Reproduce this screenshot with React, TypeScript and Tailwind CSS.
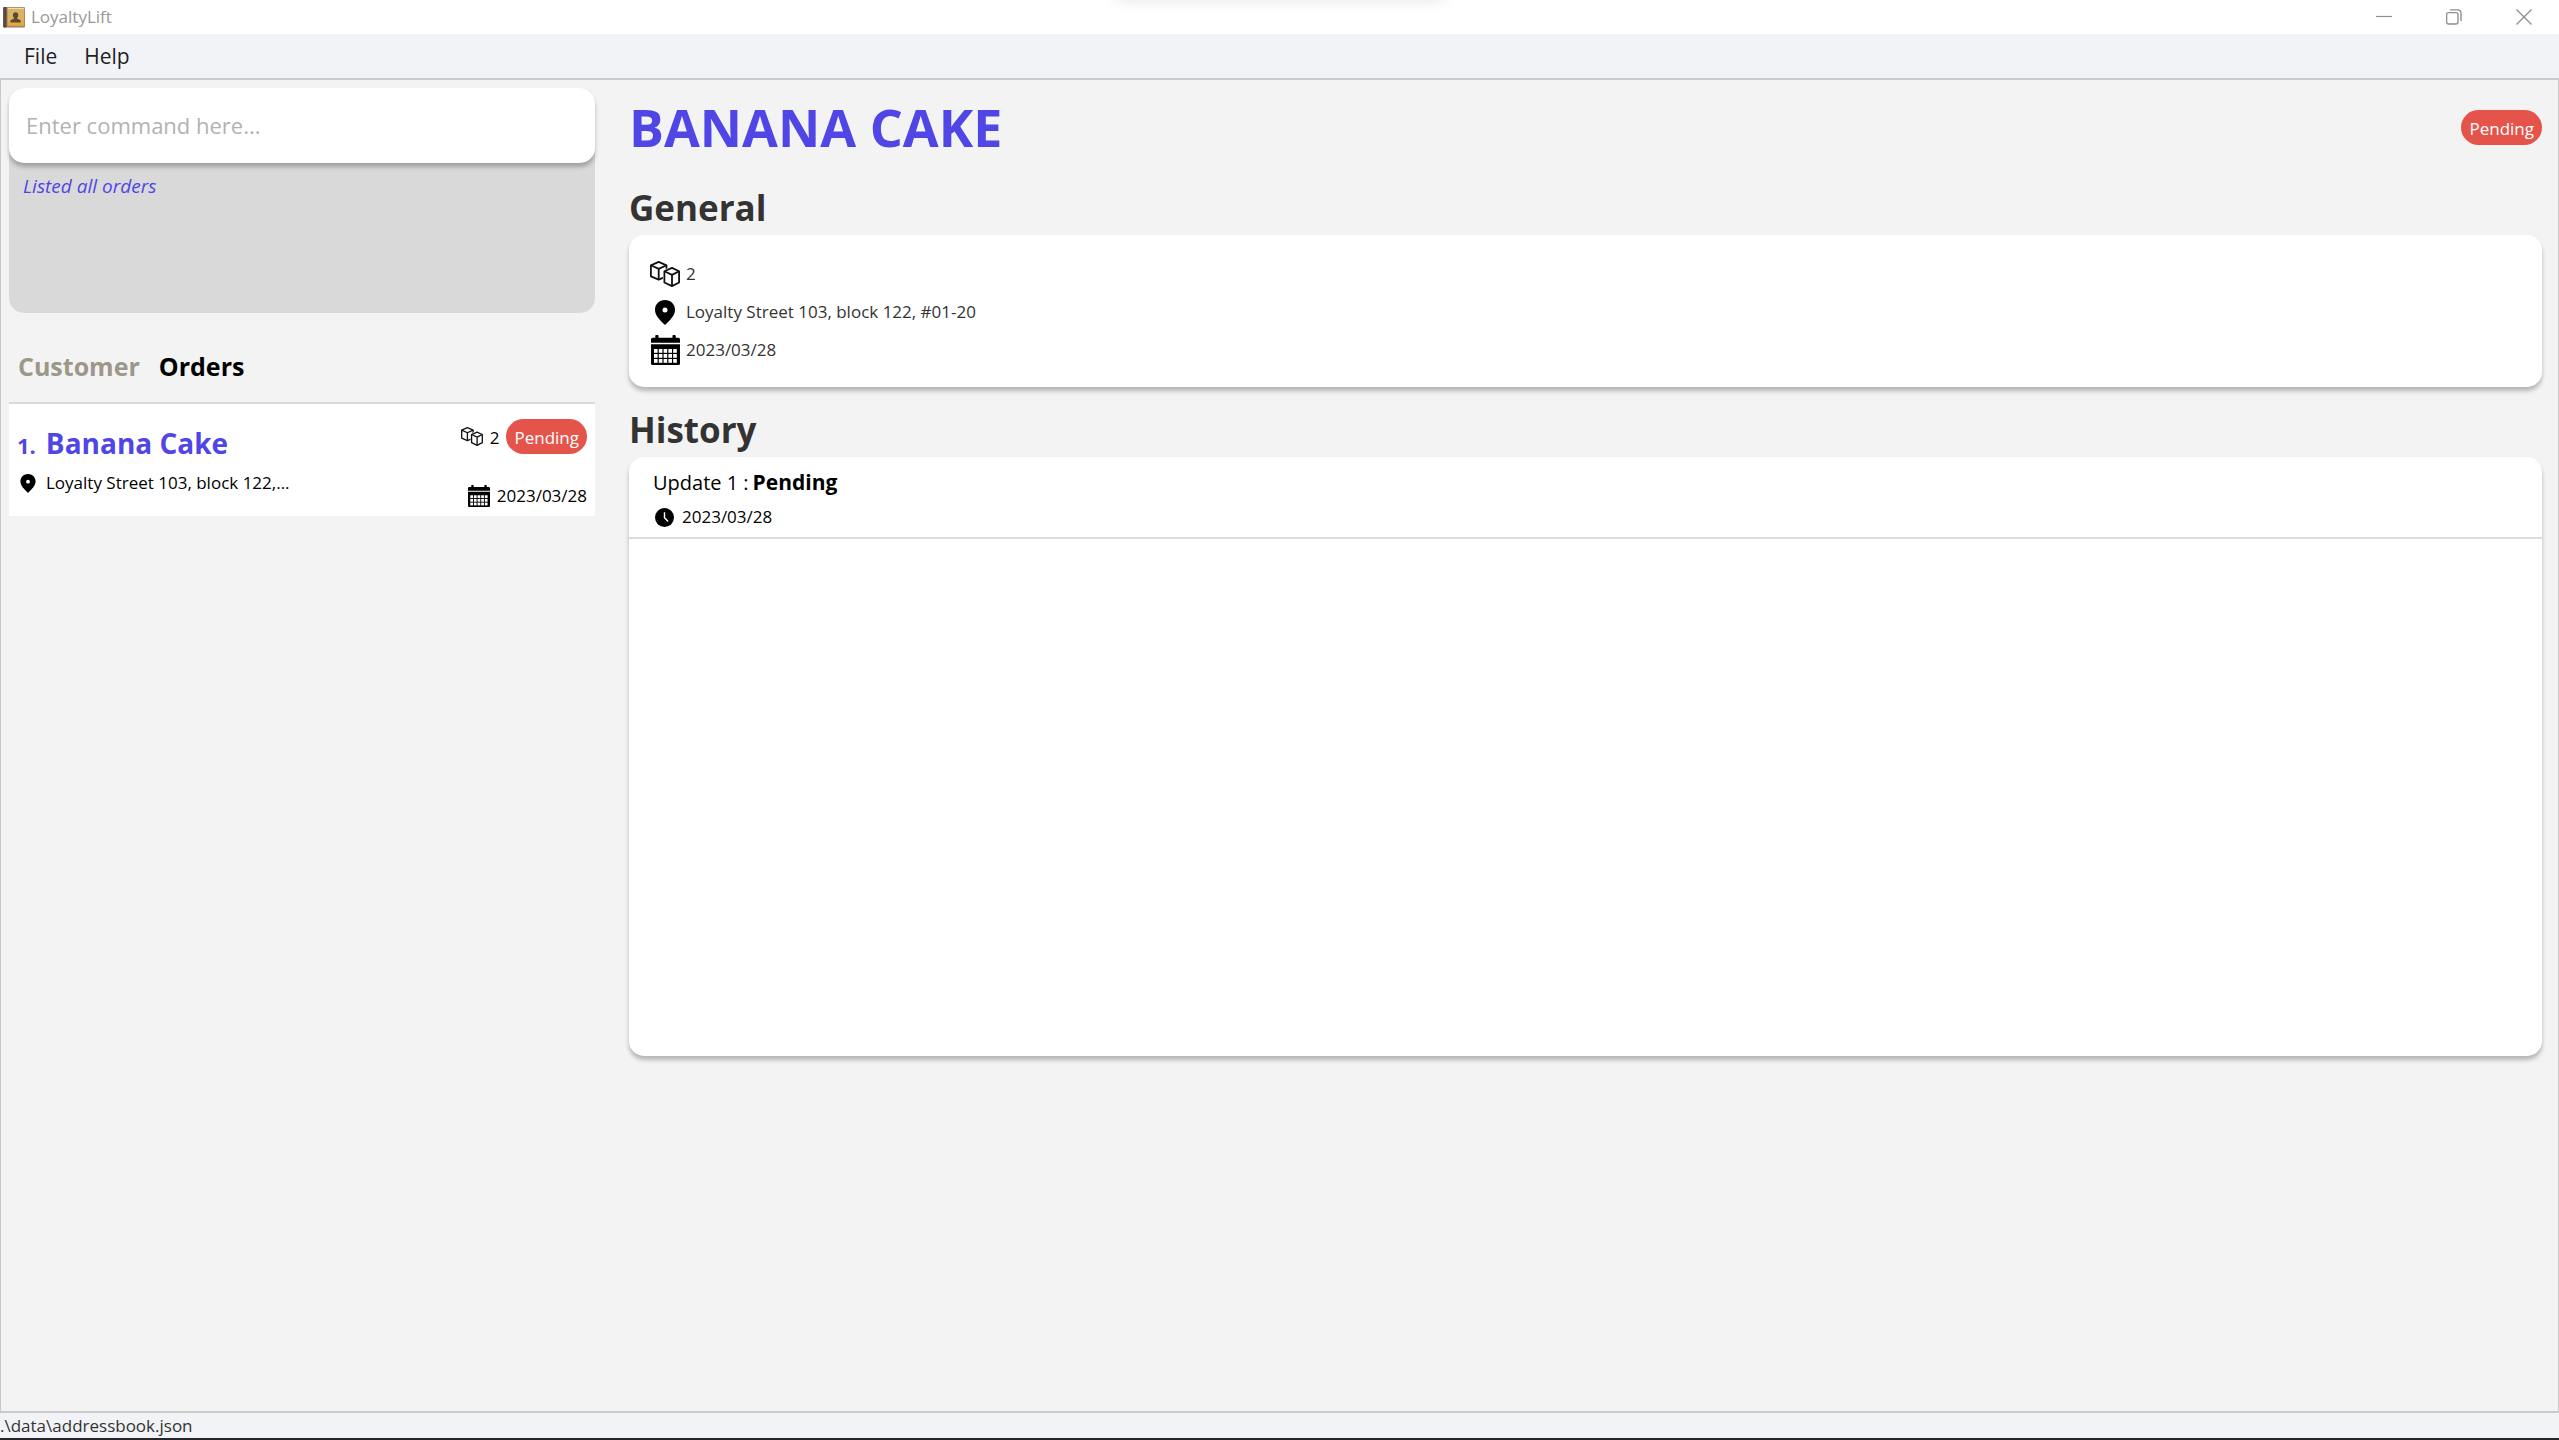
import type { ReactNode } from "react";

function AppLogo() {
  return (
    <svg className="h-[21px] w-[22px]" viewBox="0 0 22 21" aria-hidden="true">
      <defs>
        <linearGradient id="cover" x1="0" y1="0" x2="0" y2="1">
          <stop offset="0" stopColor="#d9b271" />
          <stop offset="0.55" stopColor="#dfb160" />
          <stop offset="1" stopColor="#dfa640" />
        </linearGradient>
      </defs>
      <rect x="0" y="0" width="22" height="20.5" rx="1.2" fill="#a08254" />
      <rect x="4" y="1" width="17.2" height="18" fill="url(#cover)" />
      <rect x="4" y="0.8" width="17.2" height="1.2" fill="#f0dcb4" />
      <rect x="0.3" y="0" width="3.4" height="20.5" rx="1" fill="#5a4840" />
      <rect x="3.7" y="0.6" width="0.8" height="19.4" fill="#8f7c64" />
      <path d="M12.6 5.2c1.7 0 2.7 1.1 2.7 2.8 0 1.4-.6 2.1-1 2.8v1.2c1.5.5 3.5.6 3.5 2.2v1.3H7.4v-1.3c0-1.6 2-1.7 3.5-2.2v-1.2c-.4-.7-1-1.4-1-2.8 0-1.7 1-2.8 2.7-2.8z" fill="#5b4a30" />
    </svg>
  );
}

function BoxesIcon({ className }: { className: string }) {
  return (
    <svg className={className} viewBox="0 0 30 26" fill="#fff" stroke="#111" strokeWidth="1.8" strokeLinejoin="round" aria-hidden="true">
      <path d="M8.7 .9 16.5 4.3V15.3L8.7 18.7 .9 15.3V4.3Z" />
      <path d="M.9 4.3 8.7 7.9 16.5 4.3M8.7 7.9V18.7" fill="none" />
      <path d="M22 6.9 29.1 10.3V21.5L22 25.1 14.4 21.5V10.3Z" stroke="#fff" strokeWidth="3" />
      <path d="M22 6.9 29.1 10.3V21.5L22 25.1 14.4 21.5V10.3Z" />
      <path d="M14.4 10.3 22 13.9 29.1 10.3M22 13.9V25.1" fill="none" />
    </svg>
  );
}

function PinIcon({ className }: { className: string }) {
  return (
    <svg className={className} viewBox="0 0 20 25" aria-hidden="true">
      <path
        fillRule="evenodd"
        d="M10 0C4.400 0 0 4.200 0 9.700 0 15.500 5.200 20.400 10 25c4.800-4.600 10-9.500 10-15.300C20 4.200 15.600 0 10 0Zm0 7.600a2.500 2.500 0 1 1 0 5 2.500 2.500 0 0 1 0-5Z"
        fill="#000"
      />
    </svg>
  );
}

const cellColumns = [3, 7.8, 12.6, 17.4, 22.2];
const cellRows = [14, 19, 24];

function CalendarIcon({ className }: { className: string }) {
  return (
    <svg className={className} viewBox="0 0 29 30" preserveAspectRatio="none" aria-hidden="true">
      <path d="M0 4.5Q0 2.8 1.5 2.8H4.3V.8Q4.3 0 5.1 0H6.7Q7.5 0 7.5 .8V2.8H21.5V.8Q21.5 0 22.3 0H23.9Q24.7 0 24.7 .8V2.8H27.5Q29 2.8 29 4.5V7.8H0Z" />
      <path d="M0 9.2H29V28.5Q29 30 27.5 30H1.5Q0 30 0 28.5Z" />
      {cellRows.map((y) => cellColumns.map((x) => <rect key={`${x}-${y}`} x={x} y={y} width="3.6" height="3.8" fill="#fff" />))}
    </svg>
  );
}

function ClockIcon() {
  return (
    <svg className="h-[19px] w-[19px]" viewBox="0 0 20 20" aria-hidden="true">
      <circle cx="10" cy="10" r="10" />
      <path d="M10 4.5V10.3L13.8 14.2" fill="none" stroke="#fff" strokeWidth="1.5" />
    </svg>
  );
}

function StatusBadge({ children }: { children: ReactNode }) {
  return <span className="shrink-0 rounded-full bg-[#e5544b] px-2 pt-0.5 text-[17px] leading-[33px] text-white">{children}</span>;
}

function WindowButton({ label, children }: { label: string; children: ReactNode }) {
  return (
    <button type="button" aria-label={label} className="flex h-full w-[70px] items-center justify-center">
      <svg className="h-4 w-4" viewBox="0 0 16 16" fill="none" stroke="#8f8f8f" strokeWidth="1.2" aria-hidden="true">
        {children}
      </svg>
    </button>
  );
}

function DetailRow({ icon, children }: { icon: ReactNode; children: ReactNode }) {
  return (
    <li className="flex h-[38px] items-center gap-[6px]">
      <span className="flex w-[30px] justify-center">{icon}</span>
      {children}
    </li>
  );
}

export default function App() {
  return (
    <div className="flex min-h-screen flex-col border-b-2 border-[#25252b] bg-[#f3f3f3] font-['Open_Sans','Noto_Sans',sans-serif] text-[17px] text-black">
      <header className="relative flex h-[34px] items-center overflow-hidden bg-white pl-[3px]">
        <div className="absolute -top-2 left-1/2 h-2 w-[330px] -translate-x-1/2 rounded-lg shadow-[0_0_14px_rgba(0,0,0,0.12)]" />
        <AppLogo />
        <span className="ml-[6px] text-[#999999]">LoyaltyLift</span>
        <div className="ml-auto flex h-full">
          <WindowButton label="Minimize">
            <path d="M0 7.5H16" />
          </WindowButton>
          <WindowButton label="Restore">
            <rect x="0.6" y="3.6" width="11.4" height="11.4" rx="2" strokeWidth="1.4" />
            <path d="M4 .9H11.5Q15 .9 15 4.4V12" strokeWidth="1.4" />
          </WindowButton>
          <WindowButton label="Close">
            <path d="M.5 .5 15.5 15.5M15.5 .5 .5 15.5" strokeWidth="1.4" />
          </WindowButton>
        </div>
      </header>

      <nav className="flex h-[46px] items-center gap-[27px] border-b-2 border-[#cacbcd] bg-[#f2f3f6] pl-6 text-[21px] leading-[44px] text-[#1f1f1f]">
        <button type="button">File</button>
        <button type="button">Help</button>
      </nav>

      <main className="flex flex-1 border-x border-[#c8c8c8] pr-4 pl-2">
        <aside className="w-[586px] shrink-0 pt-2">
          <div className="h-[225px] rounded-[15px] bg-[#d9d9d9]">
            <input
              type="text"
              aria-label="Command"
              placeholder="Enter command here..."
              className="block h-[75px] w-full rounded-[15px] bg-white px-[17px] pb-0.5 text-[22px] shadow-[0_4px_4px_rgba(0,0,0,0.25)] outline-none placeholder:text-[#b2b2b2]"
            />
            <p className="mt-[9px] px-[14px] text-[19px] leading-7 text-[#4f46e5] italic">Listed all orders</p>
          </div>

          <div className="mt-[37px] flex gap-[19px] pl-[9px] text-[25px] leading-8 font-bold">
            <button type="button" className="text-[#9b9889]">Customer</button>
            <button type="button">Orders</button>
          </div>

          <ul className="mt-5 border-t-2 border-[#d9d9d9]">
            <li className="flex h-[112px] justify-between bg-white px-2">
              <div className="pt-[21px]">
                <h3 className="flex items-baseline gap-[10px] text-[28px] leading-9 font-bold text-[#4f46e5]">
                  <span className="text-[22px]">1.</span>
                  Banana Cake
                </h3>
                <p className="mt-2 flex items-center gap-[10px] pl-[3px] leading-6">
                  <PinIcon className="h-[19px] w-4" />
                  Loyalty Street 103, block 122,...
                </p>
              </div>
              <div className="flex flex-col items-end justify-between pt-[15px] pb-2">
                <div className="flex items-center">
                  <BoxesIcon className="h-[19px] w-[22px]" />
                  <span className="mr-[7px] ml-[7px] pt-0.5 leading-[33px]">2</span>
                  <StatusBadge>Pending</StatusBadge>
                </div>
                <p className="flex items-center gap-[7px] leading-6">
                  <CalendarIcon className="h-[22px] w-[22px]" />
                  2023/03/28
                </p>
              </div>
            </li>
          </ul>
        </aside>

        <section className="ml-[34px] min-w-0 flex-1 pt-[15px]">
          <div className="flex items-center justify-between">
            <h1 className="text-[52px] leading-[64px] font-bold text-[#4f46e5]">BANANA CAKE</h1>
            <StatusBadge>Pending</StatusBadge>
          </div>

          <h2 className="mt-[27px] text-[35px] leading-[44px] font-bold text-[#333333]">General</h2>
          <ul className="mt-[5px] rounded-[15px] bg-white px-[21px] pt-5 pb-[18px] text-[#333333] shadow-[0_4px_4px_rgba(0,0,0,0.25)]">
            <DetailRow icon={<BoxesIcon className="h-[26px] w-[30px]" />}>2</DetailRow>
            <DetailRow icon={<PinIcon className="h-[25px] w-5" />}>Loyalty Street 103, block 122, #01-20</DetailRow>
            <DetailRow icon={<CalendarIcon className="h-[30px] w-[29px]" />}>2023/03/28</DetailRow>
          </ul>

          <h2 className="mt-[21px] text-[35px] leading-[44px] font-bold text-[#333333]">History</h2>
          <ul className="mt-[5px] h-[599px] rounded-[15px] bg-white shadow-[0_4px_4px_rgba(0,0,0,0.25)]">
            <li className="border-b-2 border-[#dcdcdc] pt-[9px] pb-2 pl-6">
              <p className="flex items-baseline gap-1 text-[20px] leading-8">
                Update 1 :<strong className="text-[21px]">Pending</strong>
              </p>
              <p className="mt-[6px] flex items-center gap-2 pl-0.5 leading-6">
                <ClockIcon />
                2023/03/28
              </p>
            </li>
          </ul>
        </section>
      </main>

      <footer className="border-t-2 border-[#c8c9cb] bg-[#f2f3f6] text-[17px] leading-[25px] text-[#333333]">.\data\addressbook.json</footer>
    </div>
  );
}
